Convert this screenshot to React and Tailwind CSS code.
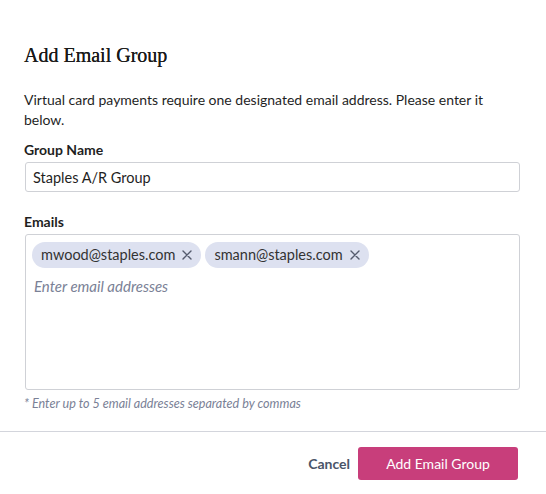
import React, { useState } from "react";

const emails = ["mwood@staples.com", "smann@staples.com"];

function CloseIcon() {
  return (
    <svg width="10" height="10" viewBox="0 0 10 10" fill="none" stroke="currentColor" strokeWidth="1.4" strokeLinecap="round">
      <path d="M1 1L9 9M9 1L1 9" />
    </svg>
  );
}

export default function App() {
  const [groupName, setGroupName] = useState("Staples A/R Group");
  const [chips, setChips] = useState(emails);

  return (
    <div className="w-[546px] h-[494px] bg-white text-[#1f1f1f] font-['Lato',sans-serif] flex flex-col">
      <div className="px-6 pt-[42px] flex-1">
        <h2 className="font-['Liberation_Serif',serif] text-[20px] leading-[26px] text-[#1a1a1a] [text-shadow:0_0_0.4px_#1a1a1a]">Add Email Group</h2>

        <p className="mt-[22px] text-[14px] leading-[20px] pr-4">
          Virtual card payments require one designated email address. Please enter it below.
        </p>

        <label className="block mt-[11px] text-[14px] leading-[18px] font-bold">Group Name</label>
        <input
          value={groupName}
          onChange={(e) => setGroupName(e.target.value)}
          className="mt-[3px] w-[495px] h-[30px] ml-px px-[7px] text-[14.5px] border border-[#cfd1d6] rounded-[3px] outline-none"
        />

        <label className="block mt-[21px] text-[14px] leading-[18px] font-bold">Emails</label>
        <div className="mt-[3px] ml-px w-[495px] h-[156px] border border-[#cfd1d6] rounded-[3px] px-[6px] pt-[7px]">
          <div className="flex flex-wrap gap-1">
            {chips.map((em) => (
              <span key={em} className="h-[26px] flex items-center gap-[7px] pl-[9px] pr-[9px] rounded-full bg-[#dde1f0] text-[14.5px] text-[#333]">
                {em}
                <button
                  onClick={() => setChips((prev) => prev.filter((c) => c !== em))}
                  className="text-[#555b6e]"
                >
                  <CloseIcon />
                </button>
              </span>
            ))}
          </div>
          <input
            placeholder="Enter email addresses"
            className="mt-[6px] ml-[2px] w-full h-[24px] text-[15px] italic placeholder:text-[#7a8196] outline-none"
          />
        </div>
        <p className="mt-[5px] text-[12.6px] italic text-[#7a8196]">* Enter up to 5 email addresses separated by commas</p>
      </div>

      <div className="border-t border-[#d3d5dc] h-[63px] flex items-center justify-end pr-[28px] gap-2">
        <button className="text-[14px] font-bold text-[#4a5468]">Cancel</button>
        <button className="w-[160px] h-[33px] rounded-[3px] bg-[#c83e7b] text-white text-[14px]">Add Email Group</button>
      </div>
    </div>
  );
}
